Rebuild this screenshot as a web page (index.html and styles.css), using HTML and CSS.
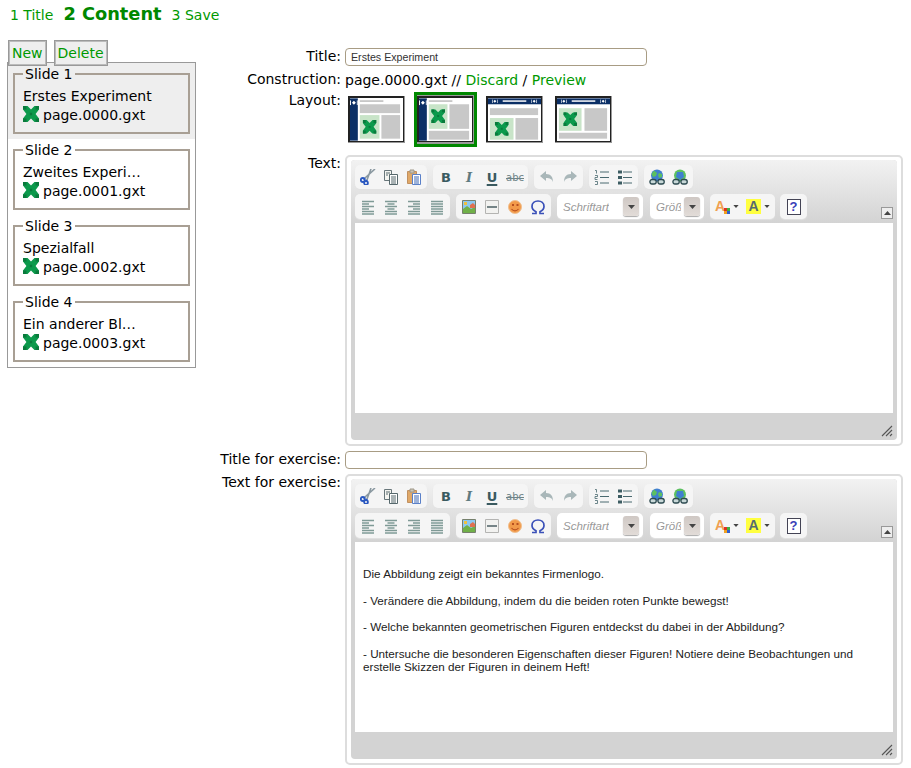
FILE: index.html
```html
<!DOCTYPE html>
<html lang="en">
<head>
  <meta charset="UTF-8" />
  <title>Edit Content</title>
  <link rel="stylesheet" href="styles.css">
</head>
<body>
  <svg class="sprite" xmlns="http://www.w3.org/2000/svg">
    <symbol id="i-x" viewBox="1 1 14 14">
      <path fill="#0c9a4c" d="M1 1h4l3 3 3-3h4v3l-3 4 3 4v3h-4l-3-3-3 3H1v-3l3-4-3-4z"/>
      <path fill="#0a7a3c" d="M1 1h3v3H1zM12 1h3v3h-3zM1 12h3v3H1zM12 12h3v3h-3zM7 7h2v2H7z"/>
    </symbol>
    <symbol id="i-cut" viewBox="0 0 16 16">
      <path fill="none" stroke="#8a98a0" stroke-width="1.600" d="M5 9 15 0M7 11l4-11"/>
      <path fill="none" stroke="#2a58c0" stroke-width="2.200" d="M5 9 3.500 10.500M7 11l-1 1.500"/>
      <circle cx="2.800" cy="11" r="2" fill="none" stroke="#2a58c0" stroke-width="1.800"/>
      <circle cx="6" cy="14" r="1.900" fill="none" stroke="#2a58c0" stroke-width="1.800"/>
    </symbol>
    <symbol id="i-copy" viewBox="0 0 16 16">
      <path fill="#f4f4f0" stroke="#68767a" d="M1.500 1.500h7v10h-7z"/>
      <path fill="#fff" stroke="#56686c" d="M6.500 5.500h8v10h-8z"/>
      <path stroke="#56686c" d="M3 4h4M3 6h2M8 8h5M8 10h5M8 12h5M8 14h5"/>
    </symbol>
    <symbol id="i-paste" viewBox="0 0 16 16">
      <path fill="#e0a868" stroke="#c09060" d="M1.500 2.500h9v12h-9z"/>
      <path fill="#c9c4b8" stroke="#a09888" d="M4 1h4v3H4z"/>
      <path fill="#fff" stroke="#5a80c8" d="M6.500 5.500h8v10h-8z"/>
      <path stroke="#3c66b4" d="M8 8h5M8 10h5M8 12h5M8 14h5"/>
    </symbol>
    <symbol id="i-undo" viewBox="0 0 16 16">
      <path fill="#a9b7b9" d="M7 2v3c5 0 7 3 7 8-1-3-3-4-7-4v3L1 7z"/>
    </symbol>
    <symbol id="i-redo" viewBox="0 0 16 16">
      <path fill="#a9b7b9" d="M9 2v3c-5 0-7 3-7 8 1-3 3-4 7-4v3l6-5z"/>
    </symbol>
    <symbol id="i-ol" viewBox="0 0 16 16">
      <path fill="none" stroke="#4a6a70" stroke-width=".8" d="M1 1.500h1.500v3M1 6.500h2.500v2H1v2h2.500M1 12.500h2.500v3H1"/>
      <path stroke="#4a6a70" d="M6 3h9M6 8.500h9M6 14h9"/>
    </symbol>
    <symbol id="i-ul" viewBox="0 0 16 16">
      <path fill="#3c5c62" d="M1 1.500h4v3H1zM1 7h4v3H1zM1 12.500h4v3H1z"/>
      <path stroke="#4a6a70" d="M6 3h9M6 8.500h9M6 14h9"/>
    </symbol>
    <symbol id="i-link" viewBox="0 0 16 16">
      <circle cx="8" cy="6.500" r="6" fill="#3f7fd0"/>
      <path fill="#5cc060" d="M5 1.500 8 4l-1 3-3 1-1.500-3zM10 4l3 1v3l-3 1-1-3z"/>
      <path fill="#c8d8d8" stroke="#2c4a50" stroke-width="1.300" d="M1 12.500a2 2 0 0 1 2-2h2a2 2 0 0 1 0 4.500H3a2 2 0 0 1-2-2.500zM9 12.500a2 2 0 0 1 2-2h2a2 2 0 0 1 0 4.500h-2a2 2 0 0 1-2-2.500z"/>
    </symbol>
    <symbol id="i-unlink" viewBox="0 0 16 16">
      <circle cx="8" cy="6.500" r="6" fill="#5cc060"/>
      <path fill="#3f7fd0" d="M5 3h6l1 5-4 3-4-3z"/>
      <path fill="#c8d8d8" stroke="#2c4a50" stroke-width="1.300" d="M1 12.500a2 2 0 0 1 2-2h2a2 2 0 0 1 0 4.500H3a2 2 0 0 1-2-2.500zM9 12.500a2 2 0 0 1 2-2h2a2 2 0 0 1 0 4.500h-2a2 2 0 0 1-2-2.500z"/>
    </symbol>
    <symbol id="i-left" viewBox="0 0 16 16">
      <path stroke="#7f9a96" stroke-width="1.300" d="M2 2.500h12M2 5h7M2 7.500h12M2 10h7M2 12.500h12M2 15h12"/>
    </symbol>
    <symbol id="i-center" viewBox="0 0 16 16">
      <path stroke="#7f9a96" stroke-width="1.300" d="M2 2.500h12M4.500 5h7M2 7.500h12M4.500 10h7M2 12.500h12M2 15h12"/>
    </symbol>
    <symbol id="i-right" viewBox="0 0 16 16">
      <path stroke="#7f9a96" stroke-width="1.300" d="M2 2.500h12M7 5h7M2 7.500h12M7 10h7M2 12.500h12M2 15h12"/>
    </symbol>
    <symbol id="i-justify" viewBox="0 0 16 16">
      <path stroke="#7f9a96" stroke-width="1.300" d="M2 2.500h12M2 5h12M2 7.500h12M2 10h12M2 12.500h12M2 15h12"/>
    </symbol>
    <symbol id="i-image" viewBox="0 0 16 16">
      <path fill="#8cc8f0" stroke="#76806c" d="M1.500 1.500h13v13h-13z"/>
      <path fill="#70b048" d="M2 10l4-3 4 3 4-2v6H2z"/>
      <path fill="#f0c040" d="M3 3h3v3H3z"/>
      <path fill="#e07050" d="M9 6l3-2 2 2v3H9z"/>
    </symbol>
    <symbol id="i-rule" viewBox="0 0 16 16">
      <path fill="#f2f2f0" stroke="#b4b4b2" d="M1.500 1.500h13v13h-13z"/>
      <path stroke="#56686c" stroke-width="1.600" d="M3 8h10"/>
    </symbol>
    <symbol id="i-smile" viewBox="0 0 16 16">
      <circle cx="8" cy="8" r="6.500" fill="#f29a4a" stroke="#f0c090"/>
      <path fill="#b85020" d="M5 5h2v2H5zM9.500 5h2v2h-2z"/>
      <path fill="none" stroke="#b85020" stroke-width="1.200" d="M4.500 10c2 2.500 5 2.500 7 0"/>
    </symbol>
    <symbol id="i-omega" viewBox="0 0 16 16">
      <path fill="none" stroke="#3a50b8" stroke-width="1.700" d="M2 14.500h4v-1.800C3.500 11.500 2 9.500 2 7.500 2 4 4.700 2 8 2s6 2 6 5.500c0 2-1.500 4-4 5.200v1.800h4"/>
    </symbol>
    <symbol id="i-arrow" viewBox="0 0 7 4">
      <path fill="#444" d="M0 0h7L3.500 4z"/>
    </symbol>
    <symbol id="i-arrows" viewBox="0 0 8 5">
      <path fill="#fff" d="M0 0h1v5H0zM2 2.500 4 .5v4zM8 0H7v5h1zM6 2.500 4 .5v4z"/>
    </symbol>
    <symbol id="i-grip" viewBox="0 0 12 12">
      <path stroke="#555" stroke-width="1.100" d="M1 11 11 1M5 11l6-6M9 11l2-2"/>
    </symbol>
    <symbol id="i-swatch" viewBox="0 0 6 6">
      <path fill="#e03020" d="M0 0h3v3H0z"/>
      <path fill="#40b040" d="M3 0h3v3H3z"/>
      <path fill="#f0a020" d="M0 3h3v3H0z"/>
      <path fill="#3060d0" d="M3 3h3v3H3z"/>
    </symbol>
  </svg>

  <div class="steps">
    <a href="#">1 Title</a>
    <a href="#" class="current">2 Content</a>
    <a href="#">3 Save</a>
  </div>

  <div class="page">
    <div class="side">
      <div class="side-buttons">
        <button class="tab">New</button>
        <button class="tab">Delete</button>
      </div>
      <div class="slides">
        <div class="slide selected">
          <fieldset>
            <legend>Slide 1</legend>
            <div class="name">Erstes Experiment</div>
            <div class="file"><svg class="x-icon"><use href="#i-x"/></svg>page.0000.gxt</div>
          </fieldset>
        </div>
        <div class="slide">
          <fieldset>
            <legend>Slide 2</legend>
            <div class="name">Zweites Experi…</div>
            <div class="file"><svg class="x-icon"><use href="#i-x"/></svg>page.0001.gxt</div>
          </fieldset>
        </div>
        <div class="slide">
          <fieldset>
            <legend>Slide 3</legend>
            <div class="name">Spezialfall</div>
            <div class="file"><svg class="x-icon"><use href="#i-x"/></svg>page.0002.gxt</div>
          </fieldset>
        </div>
        <div class="slide">
          <fieldset>
            <legend>Slide 4</legend>
            <div class="name">Ein anderer Bl…</div>
            <div class="file"><svg class="x-icon"><use href="#i-x"/></svg>page.0003.gxt</div>
          </fieldset>
        </div>
      </div>
    </div>

    <form class="form">
      <label class="lbl">Title:</label>
      <input class="text-input" type="text" value="Erstes Experiment" />

      <label class="lbl">Construction:</label>
      <div class="con">page.0000.gxt // <a href="#">Discard</a> / <a href="#">Preview</a></div>

      <label class="lbl">Layout:</label>
      <div class="layouts">
        <div class="layout">
          <svg width="58" height="47" viewBox="0 0 58 47">
            <rect x="2" y="2" width="8" height="43" fill="#0b2f66"/>
            <use href="#i-arrows" x="2" y="4" width="8" height="5"/>
            <rect x="12" y="4" width="24" height="1.500" fill="#bbb"/>
            <rect x="12" y="8" width="41" height="9" fill="#c8c8c8"/>
            <rect x="12" y="19" width="20" height="24" fill="#c8e4c8"/>
            <use href="#i-x" x="15" y="24" width="14" height="14"/>
            <rect x="34" y="19" width="19" height="24" fill="#c8c8c8"/>
          </svg>
        </div>
        <div class="layout active">
          <svg width="58" height="47" viewBox="0 0 58 47">
            <rect x="2" y="2" width="8" height="43" fill="#0b2f66"/>
            <use href="#i-arrows" x="2" y="4" width="8" height="5"/>
            <rect x="12" y="4" width="24" height="1.500" fill="#bbb"/>
            <rect x="12" y="8" width="19" height="25" fill="#c8e4c8"/>
            <use href="#i-x" x="14.500" y="13" width="14" height="14"/>
            <rect x="33" y="8" width="20" height="25" fill="#c8c8c8"/>
            <rect x="12" y="35" width="41" height="9" fill="#c8c8c8"/>
          </svg>
        </div>
        <div class="layout">
          <svg width="58" height="47" viewBox="0 0 58 47">
            <rect x="2" y="2" width="54" height="6" fill="#0b2f66"/>
            <use href="#i-arrows" x="6" y="3" width="6" height="4"/>
            <use href="#i-arrows" x="46" y="3" width="6" height="4"/>
            <rect x="17" y="4" width="24" height="1.500" fill="#fff"/>
            <rect x="4" y="12" width="49" height="7" fill="#c8c8c8"/>
            <rect x="4" y="22" width="24" height="22" fill="#c8e4c8"/>
            <use href="#i-x" x="9" y="26" width="14" height="14"/>
            <rect x="30" y="22" width="23" height="22" fill="#c8c8c8"/>
          </svg>
        </div>
        <div class="layout">
          <svg width="58" height="47" viewBox="0 0 58 47">
            <rect x="2" y="2" width="54" height="6" fill="#0b2f66"/>
            <use href="#i-arrows" x="6" y="3" width="6" height="4"/>
            <use href="#i-arrows" x="46" y="3" width="6" height="4"/>
            <rect x="17" y="4" width="24" height="1.500" fill="#fff"/>
            <rect x="4" y="12" width="23" height="23" fill="#c8e4c8"/>
            <use href="#i-x" x="8.500" y="16" width="14" height="14"/>
            <rect x="30" y="12" width="23" height="23" fill="#c8c8c8"/>
            <rect x="4" y="37" width="49" height="6" fill="#c8c8c8"/>
          </svg>
        </div>
      </div>

      <label class="lbl">Text:</label>
      <div class="editor">
        <div class="editor-inner">
          <div class="toolbar">
            <div class="tb-row">
              <div class="group">
                <span class="btn"><svg><use href="#i-cut"/></svg></span>
                <span class="btn"><svg><use href="#i-copy"/></svg></span>
                <span class="btn"><svg><use href="#i-paste"/></svg></span>
              </div>
              <div class="group">
                <span class="btn fmt b">B</span>
                <span class="btn fmt i">I</span>
                <span class="btn fmt u">U</span>
                <span class="btn fmt s">abc</span>
              </div>
              <div class="group">
                <span class="btn"><svg><use href="#i-undo"/></svg></span>
                <span class="btn"><svg><use href="#i-redo"/></svg></span>
              </div>
              <div class="group">
                <span class="btn"><svg><use href="#i-ol"/></svg></span>
                <span class="btn"><svg><use href="#i-ul"/></svg></span>
              </div>
              <div class="group">
                <span class="btn"><svg><use href="#i-link"/></svg></span>
                <span class="btn"><svg><use href="#i-unlink"/></svg></span>
              </div>
            </div>
            <div class="tb-row row2">
              <div class="group">
                <span class="btn"><svg><use href="#i-left"/></svg></span>
                <span class="btn"><svg><use href="#i-center"/></svg></span>
                <span class="btn"><svg><use href="#i-right"/></svg></span>
                <span class="btn"><svg><use href="#i-justify"/></svg></span>
              </div>
              <div class="group">
                <span class="btn"><svg><use href="#i-image"/></svg></span>
                <span class="btn"><svg><use href="#i-rule"/></svg></span>
                <span class="btn"><svg><use href="#i-smile"/></svg></span>
                <span class="btn"><svg><use href="#i-omega"/></svg></span>
              </div>
              <div class="group combo combo-font">
                <span class="combo-text">Schriftart</span>
                <span class="combo-arrow"><svg><use href="#i-arrow"/></svg></span>
              </div>
              <div class="group combo combo-size">
                <span class="combo-text">Größe</span>
                <span class="combo-arrow"><svg><use href="#i-arrow"/></svg></span>
              </div>
              <div class="group">
                <span class="btn color"><span class="a-fore">A</span><svg class="swatch"><use href="#i-swatch"/></svg><svg class="mini"><use href="#i-arrow"/></svg></span>
                <span class="btn color"><span class="a-back">A</span><svg class="mini"><use href="#i-arrow"/></svg></span>
              </div>
              <div class="group help-group">
                <span class="btn"><span class="help">?</span></span>
              </div>
              <span class="collapse"><svg><use href="#i-arrow"/></svg></span>
            </div>
          </div>
          <div class="content"></div>
          <div class="status"><svg><use href="#i-grip"/></svg></div>
        </div>
      </div>

      <label class="lbl">Title for exercise:</label>
      <input class="text-input" type="text" />

      <label class="lbl">Text for exercise:</label>
      <div class="editor">
        <div class="editor-inner">
          <div class="toolbar">
            <div class="tb-row">
              <div class="group">
                <span class="btn"><svg><use href="#i-cut"/></svg></span>
                <span class="btn"><svg><use href="#i-copy"/></svg></span>
                <span class="btn"><svg><use href="#i-paste"/></svg></span>
              </div>
              <div class="group">
                <span class="btn fmt b">B</span>
                <span class="btn fmt i">I</span>
                <span class="btn fmt u">U</span>
                <span class="btn fmt s">abc</span>
              </div>
              <div class="group">
                <span class="btn"><svg><use href="#i-undo"/></svg></span>
                <span class="btn"><svg><use href="#i-redo"/></svg></span>
              </div>
              <div class="group">
                <span class="btn"><svg><use href="#i-ol"/></svg></span>
                <span class="btn"><svg><use href="#i-ul"/></svg></span>
              </div>
              <div class="group">
                <span class="btn"><svg><use href="#i-link"/></svg></span>
                <span class="btn"><svg><use href="#i-unlink"/></svg></span>
              </div>
            </div>
            <div class="tb-row row2">
              <div class="group">
                <span class="btn"><svg><use href="#i-left"/></svg></span>
                <span class="btn"><svg><use href="#i-center"/></svg></span>
                <span class="btn"><svg><use href="#i-right"/></svg></span>
                <span class="btn"><svg><use href="#i-justify"/></svg></span>
              </div>
              <div class="group">
                <span class="btn"><svg><use href="#i-image"/></svg></span>
                <span class="btn"><svg><use href="#i-rule"/></svg></span>
                <span class="btn"><svg><use href="#i-smile"/></svg></span>
                <span class="btn"><svg><use href="#i-omega"/></svg></span>
              </div>
              <div class="group combo combo-font">
                <span class="combo-text">Schriftart</span>
                <span class="combo-arrow"><svg><use href="#i-arrow"/></svg></span>
              </div>
              <div class="group combo combo-size">
                <span class="combo-text">Größe</span>
                <span class="combo-arrow"><svg><use href="#i-arrow"/></svg></span>
              </div>
              <div class="group">
                <span class="btn color"><span class="a-fore">A</span><svg class="swatch"><use href="#i-swatch"/></svg><svg class="mini"><use href="#i-arrow"/></svg></span>
                <span class="btn color"><span class="a-back">A</span><svg class="mini"><use href="#i-arrow"/></svg></span>
              </div>
              <div class="group help-group">
                <span class="btn"><span class="help">?</span></span>
              </div>
              <span class="collapse"><svg><use href="#i-arrow"/></svg></span>
            </div>
          </div>
          <div class="content">
            <p>Die Abbildung zeigt ein bekanntes Firmenlogo.</p>
            <p>- Verändere die Abbildung, indem du die beiden roten Punkte bewegst!</p>
            <p>- Welche bekannten geometrischen Figuren entdeckst du dabei in der Abbildung?</p>
            <p>- Untersuche die besonderen Eigenschaften dieser Figuren! Notiere deine Beobachtungen und erstelle Skizzen der Figuren in deinem Heft!</p>
          </div>
          <div class="status"><svg><use href="#i-grip"/></svg></div>
        </div>
      </div>
    </form>
  </div>
</body>
</html>
```

FILE: styles.css
```css
body {
  font-family: "DejaVu Sans", sans-serif;
  font-size: 14px;
  margin: 0;
  background-color: #fff;
  color: #000;
}
a {
  color: #090;
  text-decoration: none;
}
.sprite {
  display: none;
}

.steps {
  display: flex;
  align-items: baseline;
  gap: 10px;
  padding: 3px 0 0 10px;
  height: 37px;
  box-sizing: border-box;
}
.steps .current {
  font-size: 17.8px;
  font-weight: bold;
  color: #080;
}

.page {
  display: flex;
  align-items: flex-start;
  padding-left: 7px;
}

/* slide list */
.side {
  width: 189px;
  flex: none;
}
.side-buttons {
  display: flex;
  gap: 7px;
  padding-left: 1px;
  margin-top: 3px;
  margin-bottom: -4px;
  position: relative;
}
.tab {
  font: inherit;
  color: #090;
  background-color: #eee;
  border: 1px solid #999;
  outline: 1px solid #bbb;
  outline-offset: -2px;
  height: 26px;
  padding: 0 3px;
}
.slides {
  border: 1px solid #999;
}
.slide {
  height: 76px;
  box-sizing: border-box;
  padding: 2px 5px 0;
}
.slide.selected {
  background-color: #eee;
}
fieldset {
  margin: 0;
  padding: 5px 8px 0;
  height: 69px;
  box-sizing: border-box;
  border: 2px solid #a89f94;
}
legend {
  padding: 1px 2px 0;
  line-height: 16px;
}
.name, .file {
  line-height: 19px;
}
.file {
  display: flex;
  align-items: center;
  gap: 4px;
}
.x-icon {
  width: 16px;
  height: 16px;
  margin-top: -4px;
}

/* form */
.form {
  display: grid;
  grid-template-columns: 145px 558px;
  column-gap: 4px;
  margin-top: 11px;
}
.lbl {
  text-align: right;
  line-height: 17px;
}
.con {
  line-height: 18px;
  margin-bottom: 3px;
}
.text-input {
  width: 302px;
  height: 18px;
  box-sizing: border-box;
  border: 1px solid #a89c84;
  border-radius: 4px;
  margin-bottom: 5px;
  padding: 0 5px;
  font-family: "Liberation Sans", sans-serif;
  font-size: 10.67px;
  color: #333;
}
.layouts {
  display: flex;
  gap: 6px;
  margin-bottom: 8px;
}
.layout {
  width: 63px;
  height: 55px;
  box-sizing: border-box;
  padding: 4px 3px;
  display: flex;
}
.layout svg {
  background-color: #fff;
  box-shadow: inset -1px -1px 0 #999, inset 0 0 0 2px #222;
}
.layout.active {
  border: 3px solid #080;
  background-color: #999;
  padding: 1px 0;
  justify-content: center;
}

/* editor */
.editor {
  border: 2px solid #ddd;
  border-radius: 5px;
  padding: 3px 4px 4px;
  margin-bottom: 5px;
  height: 291px;
  box-sizing: border-box;
}
.editor-inner {
  height: 100%;
  display: flex;
  flex-direction: column;
  background-color: #d3d3d3;
  border-radius: 4px;
  padding: 0 4px 3px;
  box-sizing: border-box;
}
.toolbar {
  display: flex;
  flex-direction: column;
  gap: 5px;
  padding: 5px 0 4px;
  margin: 0 -4px;
  background: linear-gradient(#f2f2f2, #d3d3d3);
  border-radius: 4px 4px 0 0;
}
.tb-row {
  display: flex;
  gap: 6px;
  padding: 0 4px;
  height: 24px;
}
.row2 {
  height: 25px;
}
.group {
  display: flex;
  background-color: #f5f5f5;
  border-radius: 5px;
  padding: 0 1.500px;
  box-shadow: 0 1px 1px #e2e2e2;
}
.btn {
  width: 23px;
  display: flex;
  align-items: center;
  justify-content: center;
}
.btn svg {
  width: 16px;
  height: 16px;
}
.fmt {
  font-family: "DejaVu Sans", sans-serif;
  font-size: 13px;
  color: #3a5a60;
}
.fmt.b {
  font-weight: bold;
}
.fmt.i {
  font-family: "DejaVu Serif", serif;
  font-style: italic;
  font-weight: bold;
  color: #5f7a80;
}
.fmt.u {
  font-weight: bold;
  text-decoration: underline;
  text-decoration-thickness: 2px;
  text-underline-offset: 2px;
}
.fmt.s {
  font-size: 10px;
  color: #6f8488;
  text-decoration: line-through;
}
.combo {
  background-color: #fff;
  align-items: center;
  justify-content: space-between;
  padding: 0 4px 0 6px;
  box-sizing: border-box;
}
.combo-font {
  width: 86px;
}
.combo-size {
  width: 54px;
  margin-left: 1px;
}
.combo-text {
  font-family: "Liberation Sans", sans-serif;
  font-style: italic;
  font-size: 11.500px;
  color: #999;
  overflow: hidden;
  white-space: nowrap;
}
.combo-arrow {
  flex: none;
  width: 16px;
  height: 19px;
  margin-left: 3px;
  border-radius: 3px;
  background: linear-gradient(#cfc8c4, #e2dcd8);
  box-shadow: 0 1px 1px #aaa;
  display: flex;
  align-items: center;
  justify-content: center;
}
.combo-arrow svg {
  width: 7px;
  height: 4px;
}
.btn.color {
  width: 31px;
  gap: 3px;
}
.a-fore, .a-back {
  font-family: "Liberation Sans", sans-serif;
  font-weight: bold;
  font-size: 14px;
  line-height: 15px;
}
.a-fore {
  color: #f0a050;
}
.a-back {
  color: #556a70;
  background-color: #ffff40;
  padding: 0 2px;
}
.btn .swatch {
  width: 6px;
  height: 6px;
  margin: 8px 0 0 -4px;
}
.btn .mini {
  width: 6px;
  height: 3px;
}
.help-group {
  margin-left: -1px;
  padding: 0 2px;
}
.help {
  width: 12px;
  height: 14px;
  border: 1px solid #445;
  background-color: #fff;
  color: #3a40b8;
  font-family: "Liberation Sans", sans-serif;
  font-weight: bold;
  font-size: 13px;
  line-height: 14px;
  text-align: center;
}
.collapse {
  margin-left: auto;
  align-self: flex-end;
  width: 10px;
  height: 10px;
  border: 1px solid #999;
  background-color: #eee;
  display: flex;
  align-items: center;
  justify-content: center;
}
.collapse svg {
  width: 7px;
  height: 4px;
  transform: rotate(180deg);
}
.content {
  height: 190px;
  flex: none;
  background-color: #fff;
  box-sizing: border-box;
  padding: 25px 8px 0;
  font-family: "Liberation Sans", sans-serif;
  font-size: 11.700px;
  line-height: 13.200px;
  color: #222;
}
.content p {
  margin: 0 0 13.300px;
}
.status {
  flex: 1;
  display: flex;
  justify-content: flex-end;
  align-items: flex-end;
}
.status svg {
  width: 12px;
  height: 12px;
}
```
